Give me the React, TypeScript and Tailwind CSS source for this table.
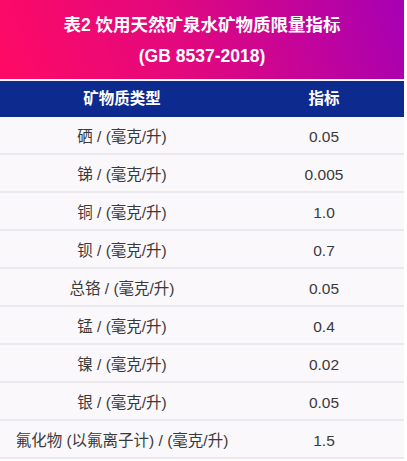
import React from "react";

const rows: [string, string][] = [
  ["硒 / (毫克/升)", "0.05"],
  ["锑 / (毫克/升)", "0.005"],
  ["铜 / (毫克/升)", "1.0"],
  ["钡 / (毫克/升)", "0.7"],
  ["总铬 / (毫克/升)", "0.05"],
  ["锰 / (毫克/升)", "0.4"],
  ["镍 / (毫克/升)", "0.02"],
  ["银 / (毫克/升)", "0.05"],
  ["氟化物 (以氟离子计) / (毫克/升)", "1.5"],
];

export default function App() {
  return (
    <div
      className="w-[407px] h-[461px] overflow-hidden bg-white"
      style={{ fontFamily: '"Liberation Sans", "Noto Sans CJK SC", sans-serif' }}
    >
      <div className="w-[404px]">
        <div className="h-[79px] pt-[3px] flex flex-col items-center justify-center bg-[linear-gradient(70deg,#ff0a64_0%,#e2087e_45%,#a600b4_100%)] text-white font-bold text-[17.5px] leading-[31px]">
          <div>表2 饮用天然矿泉水矿物质限量指标</div>
          <div>(GB 8537-2018)</div>
        </div>
        <div className="h-[2px] bg-white" />
        <div className="h-[36px] flex items-center bg-[#0d2a8e] text-white font-bold text-[15.5px]">
          <div className="w-[244px] text-center">矿物质类型</div>
          <div className="flex-1 text-center">指标</div>
        </div>
        {rows.map(([name, val], i) => (
          <div
            key={i}
            className="h-[38px] pt-[4px] flex items-center bg-[#faf8fb] border-b-2 border-[#ebe8ee] text-[#3a3a3a] text-[15.5px]"
          >
            <div className="w-[244px] text-center">{name}</div>
            <div className="flex-1 text-center">{val}</div>
          </div>
        ))}
      </div>
    </div>
  );
}
